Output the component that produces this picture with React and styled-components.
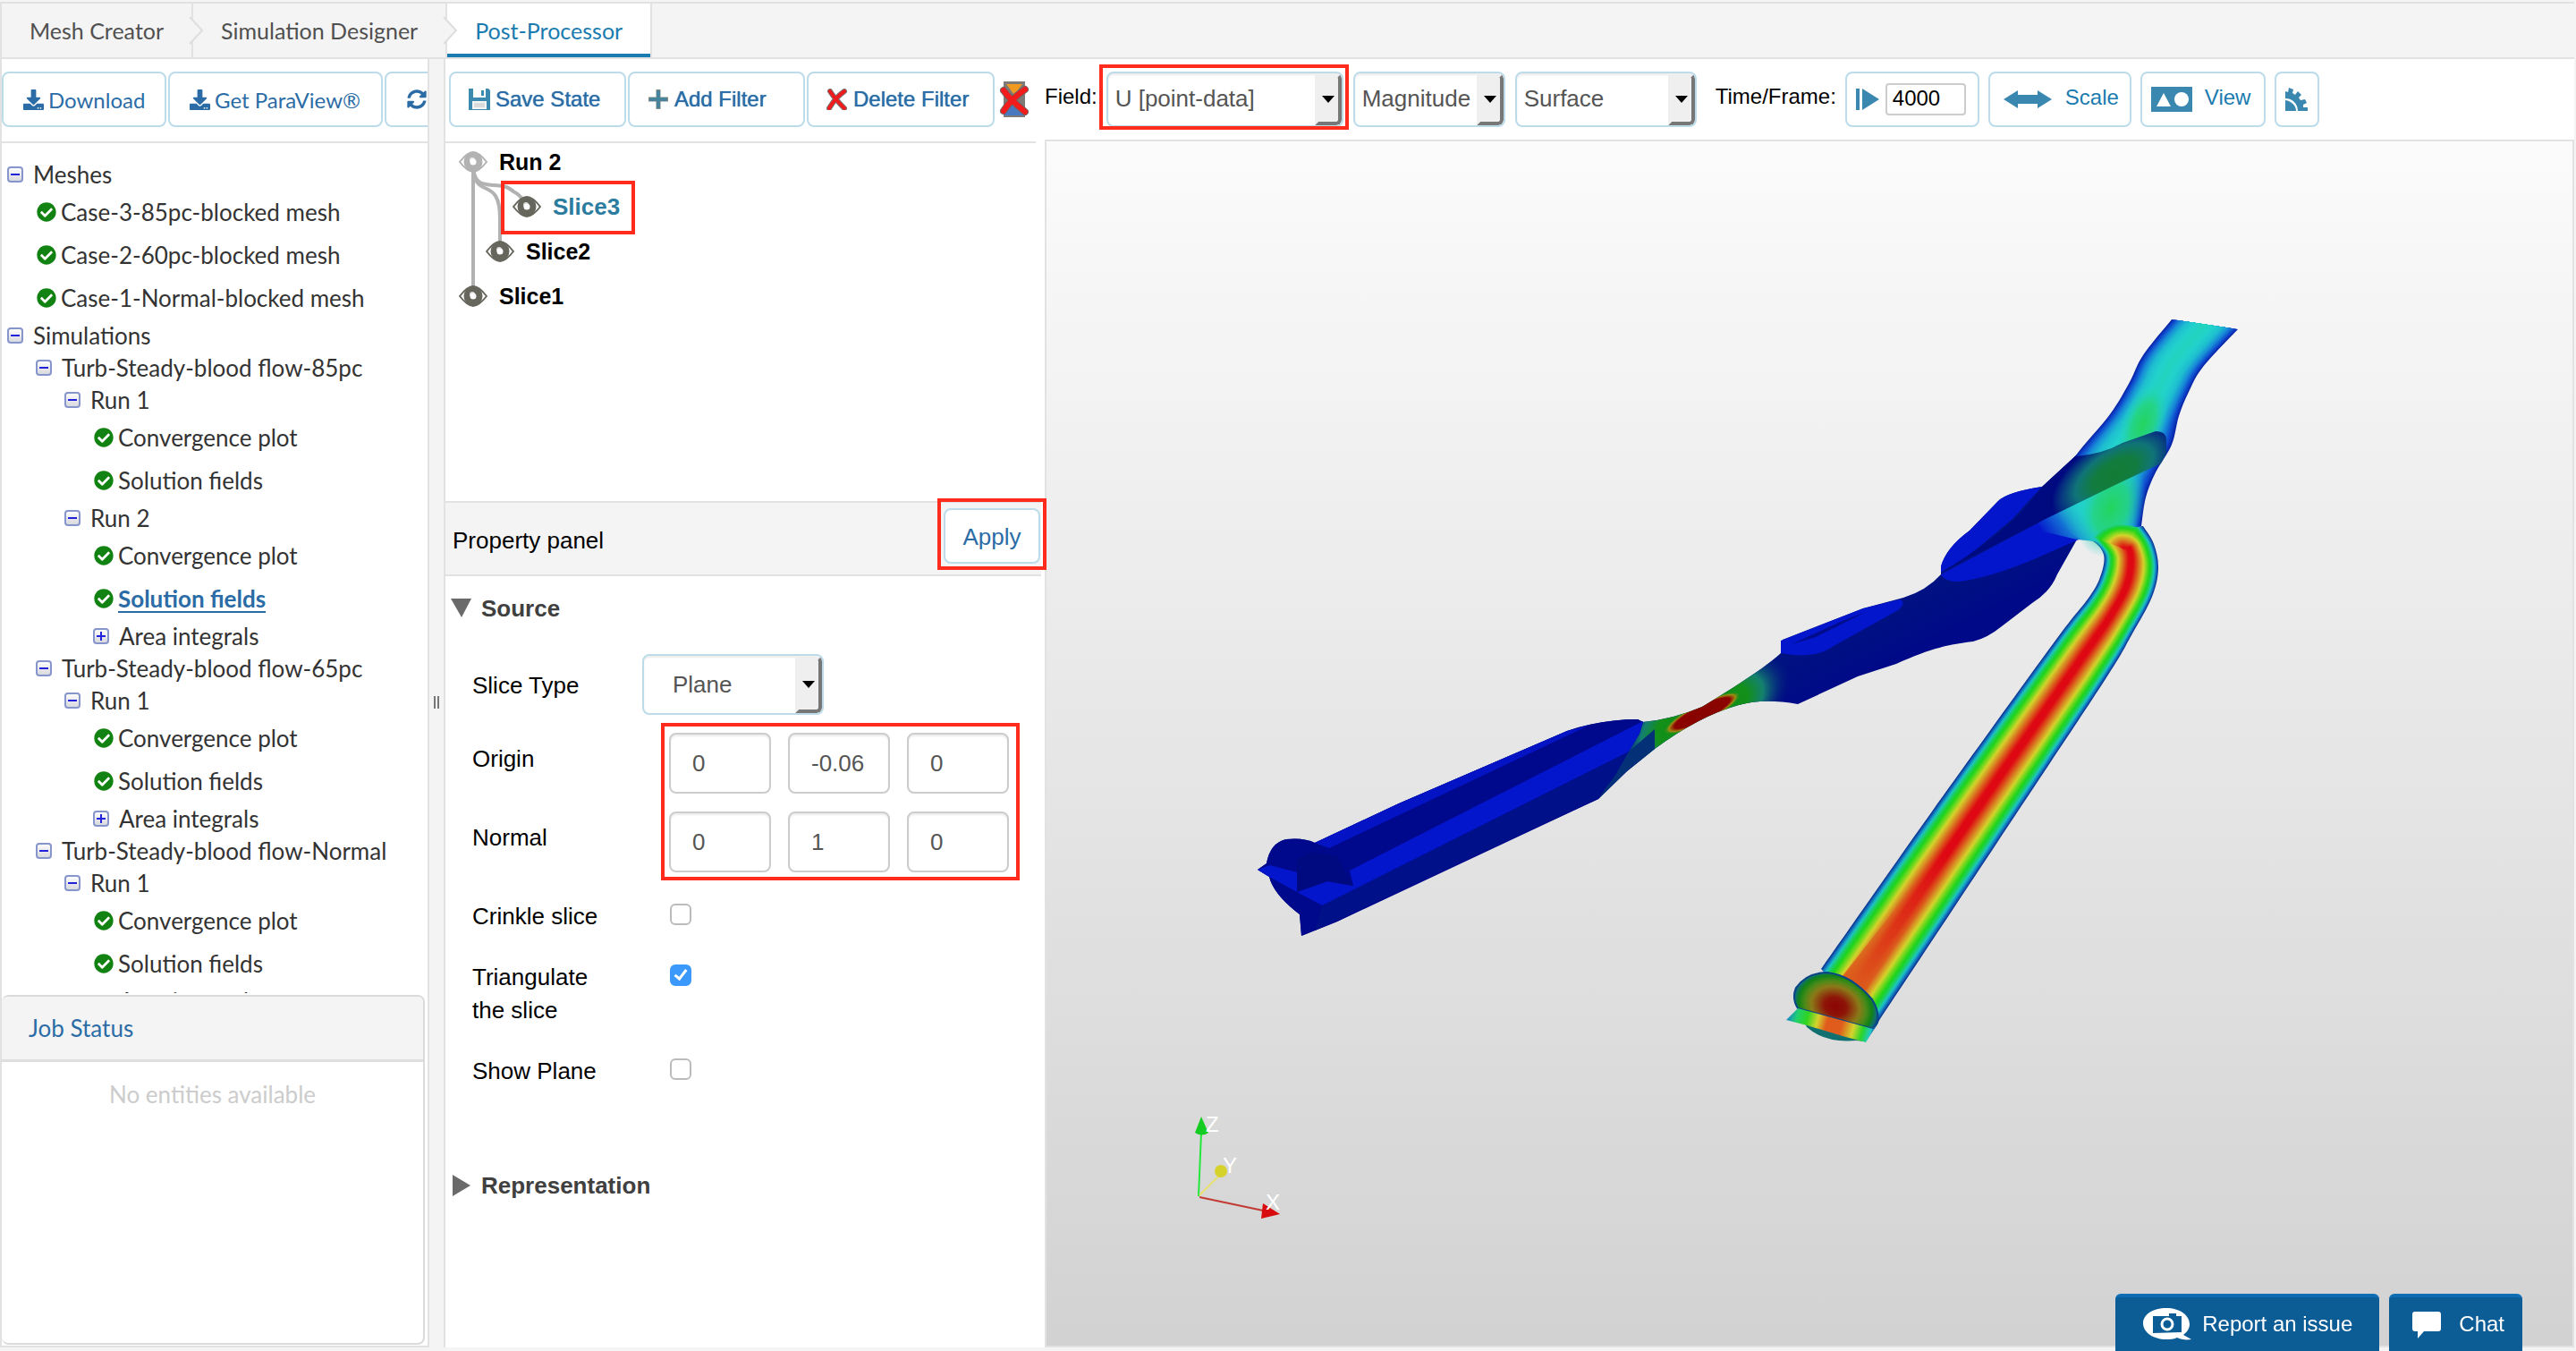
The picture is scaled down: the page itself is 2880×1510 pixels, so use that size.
import React from 'react';
import styled, { createGlobalStyle, css } from 'styled-components';
import { FaDownload, FaCheckCircle, FaSyncAlt } from 'react-icons/fa';

const GlobalStyle = createGlobalStyle`
  *, *::before, *::after { box-sizing: border-box; }
  html, body, #root { height: 100%; margin: 0; }
  body {
    background: #f4f4f4;
    color: #000;
    font-family: "Liberation Sans", Arial, sans-serif;
    font-size: 26px;
  }
  button, input, select { font-family: inherit; margin: 0; }
  ul { list-style: none; margin: 0; padding: 0; }
  svg { flex: none; }
`;

const lato = 'Lato, "Open Sans", sans-serif';
const line = '#e2e2e2';
const outline = '#bcdcea';
const link = '#2b6ca6';
const accent = '#1a7bb0';

/* ---------- page frame ---------- */

const Page = styled.div`
  display: flex;
  flex-direction: column;
  height: 100vh;
  padding: 2px 2px 4px 0;
  overflow: hidden;
`;

const TabBar = styled.nav`
  display: flex;
  flex: none;
  height: 64px;
  border: solid ${line};
  border-width: 2px 0 2px 2px;
  font-family: ${lato};
`;

const Tab = styled.a`
  position: relative;
  display: flex;
  align-items: center;
  padding: 0 31px;
  border-right: 2px solid ${line};
  color: #505050;
  font-size: 25px;
  text-decoration: none;
  ${(p) => p.$active && css`
    background: #fff;
    color: ${accent};
    box-shadow: inset 0 -4px 0 ${accent};
  `}
`;

const Chevron = styled.svg`
  position: absolute;
  right: -14px;
  top: 14px;
  width: 18px;
  height: 32px;
  z-index: 1;
`;

const Main = styled.div`
  display: flex;
  flex: 1;
  min-height: 0;
`;

/* ---------- sidebar ---------- */

const Sidebar = styled.aside`
  display: flex;
  flex-direction: column;
  flex: none;
  width: 480px;
  background: #fff;
  border: solid ${line};
  border-width: 0 2px 2px 2px;
  overflow: hidden;
  font-family: ${lato};
  color: #333;
`;

const SideTools = styled.div`
  display: flex;
  flex: none;
  gap: 2px;
  height: 94px;
  padding: 14px 0 16px;
  border-bottom: 2px solid ${line};
`;

const Button = styled.button`
  display: flex;
  flex: none;
  align-items: center;
  gap: ${(p) => p.$gap || 6}px;
  width: ${(p) => (p.$width ? `${p.$width}px` : 'auto')};
  height: 62px;
  padding: 0 0 0 ${(p) => p.$pad || 20}px;
  border: 2px solid ${outline};
  border-radius: 8px;
  background: #fff;
  color: ${(p) => p.$color || link};
  font-size: 24px;
  white-space: nowrap;
  text-shadow: ${(p) => (p.$medium ? '0 0 1px currentColor' : 'none')};
  cursor: pointer;
`;

const Tree = styled.ul`
  flex: 1;
  min-height: 0;
  padding-top: 17px;
  overflow: hidden;
`;

const TreeRow = styled.li`
  display: flex;
  align-items: center;
  height: ${(p) => (p.$leaf ? 48 : 36)}px;
  padding-left: ${(p) => (p.$leaf ? 7 : 5) + p.$level * 32}px;
  gap: ${(p) => (p.$leaf ? 5 : 10)}px;
  font-size: 26px;
  white-space: nowrap;
`;

const TreeLink = styled.a`
  color: inherit;
  text-decoration: none;
  ${(p) => p.$current && css`
    color: ${link};
    font-weight: 700;
    text-decoration: underline;
    text-decoration-thickness: 2px;
    text-underline-offset: 4px;
  `}
`;

const Toggle = styled.button`
  display: flex;
  padding: 0;
  border: 0;
  background: none;
`;

const JobCard = styled.section`
  flex: none;
  height: 391px;
  margin: 2px 3px 1px 0;
  border: 2px solid #dadada;
  border-left: 0;
  border-radius: 8px;
  background: #fff;
  overflow: hidden;
`;

const JobTitle = styled.h2`
  display: flex;
  align-items: center;
  height: 73px;
  margin: 0;
  padding-left: 30px;
  border-bottom: 3px solid #dedede;
  background: #f4f4f4;
  color: ${link};
  font-size: 26px;
  font-weight: 400;
`;

const JobEmpty = styled.p`
  margin: 18px 0 0;
  color: #ccc;
  font-size: 26px;
  line-height: 36px;
  text-align: center;
`;

const Splitter = styled.div`
  display: flex;
  flex: none;
  align-items: center;
  justify-content: center;
  gap: 2px;
  width: 16px;
  padding-bottom: 2px;
  span { width: 2px; height: 14px; background: #777; }
`;

/* ---------- workspace ---------- */

const Workspace = styled.main`
  display: flex;
  flex-direction: column;
  flex: 1;
  min-width: 0;
  background: #fff;
  border-left: 2px solid ${line};
`;

const Toolbar = styled.div`
  display: flex;
  flex: none;
  height: 90px;
  padding: 14px 0 0 4px;
  font-size: 24px;
  white-space: nowrap;
`;

const Group = styled.div`
  display: flex;
  flex: none;
  align-items: center;
  height: 62px;
  gap: ${(p) => p.$gap}px;
  margin-right: ${(p) => p.$after || 0}px;
`;

const Caption = styled.label`
  flex: none;
  padding-bottom: 6px;
  font-size: 24px;
`;

const Raised = styled.span`
  padding-bottom: 5px;
`;

const Marked = styled.div`
  position: relative;
  z-index: 1;
  display: flex;
  &::after {
    content: "";
    position: absolute;
    inset: ${(p) => p.$inset};
    border: 4px solid #ff2b1c;
    pointer-events: none;
  }
`;

const SelectShell = styled.div`
  position: relative;
  flex: none;
  width: ${(p) => p.$width}px;
  height: ${(p) => p.$height || 62}px;
  border: 2px solid ${outline};
  border-radius: 8px;
  overflow: hidden;
  box-shadow: inset 0 2px 2px #ececec;
  select {
    appearance: none;
    width: 100%;
    height: 100%;
    padding: 0 0 ${(p) => (p.$height ? 0 : 2)}px ${(p) => p.$pad || 8}px;
    border: 0;
    background: transparent;
    color: #555;
    font-size: 26px;
  }
`;

const SelectArrow = styled.span`
  position: absolute;
  top: 0;
  right: 0;
  bottom: 0;
  display: flex;
  align-items: center;
  justify-content: center;
  width: 30px;
  background: #efefef;
  border: 4px solid;
  border-color: #efefef #777 #777 #efefef;
  border-radius: 0 6px 6px 0;
  pointer-events: none;
`;

const FrameBox = styled.div`
  display: flex;
  flex: none;
  align-items: center;
  gap: 6px;
  width: 150px;
  height: 62px;
  padding-left: 9px;
  border: 2px solid ${outline};
  border-radius: 8px;
  input {
    width: 90px;
    height: 36px;
    padding: 0 6px 2px;
    border: 2px solid #ccc;
    border-radius: 4px;
    color: #000;
    font-size: 24px;
  }
`;

const Body = styled.div`
  display: flex;
  flex: 1;
  min-height: 0;
`;

const Panel = styled.section`
  display: flex;
  flex-direction: column;
  flex: none;
  width: 670px;
  padding: 2px 4px 0 0;
`;

const Pipeline = styled.ul`
  position: relative;
  display: flex;
  flex: none;
  flex-direction: column;
  gap: 8px;
  height: 402px;
  margin-right: 6px;
  border-top: 2px solid ${line};
`;

const Links = styled.svg`
  position: absolute;
  left: 0;
  top: 0;
  width: 120px;
  height: 200px;
`;

const PipelineRow = styled.li`
  position: relative;
  display: flex;
  align-items: center;
  height: 42px;
  padding-left: ${(p) => 15 + p.$depth * 30}px;
  font-size: ${(p) => (p.$selected ? 26 : 25)}px;
  font-weight: 700;
  color: ${(p) => (p.$selected ? '#2b7c9e' : '#000')};
`;

const PipelineItem = styled.div`
  display: flex;
  align-items: center;
  gap: 13px;
`;

const PropertyHead = styled.header`
  display: flex;
  flex: none;
  align-items: center;
  justify-content: space-between;
  height: 84px;
  padding: 0 1px 6px 8px;
  border: solid ${line};
  border-width: 2px 0;
  background: #f4f4f4;
  h2 { margin: 0; padding-top: 10px; font-size: 26px; font-weight: 400; }
  button {
    justify-content: center;
    width: 108px;
    padding: 3px 0 0;
    font-size: 26px;
  }
`;

const SectionTitle = styled.h3`
  display: flex;
  flex: none;
  align-items: center;
  gap: 11px;
  height: 36px;
  margin: ${(p) => p.$before || 0}px 0 0;
  padding-left: 6px;
  color: #404040;
  font-size: 26px;
`;

const Form = styled.form`
  display: flex;
  flex-direction: column;
  padding: 33px 0 0 30px;
  margin-bottom: 60px;
`;

const Field = styled.div`
  display: grid;
  grid-template-columns: 190px 1fr;
  align-items: start;
  margin-bottom: ${(p) => p.$after}px;
  line-height: 37px;
`;

const FieldName = styled.label`
  padding: ${(p) => p.$drop || 0}px 30px 0 0;
`;

const Vectors = styled.div`
  display: grid;
  grid-template-columns: 190px 1fr;
  row-gap: 20px;
  margin-bottom: 31px;
  line-height: 37px;
`;

const VectorCell = styled.div`
  display: flex;
  gap: 19px;
  padding-left: 30px;
`;

const VectorBox = styled(Marked)`
  grid-column: 2;
  grid-row: 1 / span 2;
  flex-direction: column;
  gap: 20px;
`;

const NumberInput = styled.input`
  width: 114px;
  height: 68px;
  padding: 0 0 0 24px;
  border: 2px solid #ccc;
  border-radius: 8px;
  box-shadow: inset 0 2px 2px #ececec;
  color: #555;
  font-size: 26px;
`;

const Check = styled.input`
  appearance: none;
  position: relative;
  width: 24px;
  height: 24px;
  margin: 4px 0 0 31px;
  border: 2px solid #bbb;
  border-radius: 6px;
  background: #fff;
  &:checked { background: #3b99fc; border-color: #3b99fc; }
  &:checked::after {
    content: "";
    position: absolute;
    left: 6px;
    top: 1px;
    width: 8px;
    height: 14px;
    border: solid #fff;
    border-width: 0 3px 3px 0;
    transform: rotate(38deg);
  }
`;

const Viewport = styled.section`
  position: relative;
  flex: 1;
  min-width: 0;
  border: 2px solid ${line};
  background: linear-gradient(#fbfbfb, #d2d2d2);
  > svg { display: block; width: 100%; height: 100%; }
`;

const Dock = styled.div`
  position: fixed;
  right: 60px;
  bottom: 0;
  display: flex;
  gap: 11px;
`;

const DockButton = styled.button`
  display: flex;
  align-items: center;
  gap: ${(p) => p.$gap}px;
  height: 64px;
  padding: 0 ${(p) => p.$right}px 0 ${(p) => p.$left}px;
  border: 0;
  border-top: 4px solid #0f6db3;
  border-radius: 6px 6px 0 0;
  background: #0c5c96;
  color: #fff;
  font-size: 24px;
`;

/* ---------- icons ---------- */

const ToggleIcon = ({ open }) => (
  <svg width="20" height="20" viewBox="0 0 20 20">
    <defs>
      <linearGradient id="tg" x1="0" y1="0" x2="0" y2="1">
        <stop offset="0" stopColor="#fff" />
        <stop offset="1" stopColor="#d6d6dc" />
      </linearGradient>
    </defs>
    <rect x="2" y="2" width="16" height="16" rx="3" fill="url(#tg)" stroke="#8795cd" strokeWidth="2" />
    <path d={open ? 'M5 10h10' : 'M5 10h10M10 5v10'} stroke="#2222dd" strokeWidth="2" />
  </svg>
);

const Eye = ({ color }) => (
  <svg width="32" height="26" viewBox="0 0 32 26">
    <path d="M1 13C8 4 12 2 16 2s8 2 15 11c-7 9-11 11-15 11S8 22 1 13z" fill="#fff" stroke={color} strokeWidth="2" />
    <circle cx="16" cy="13" r="7" fill="none" stroke={color} strokeWidth="7" />
    <circle cx="15" cy="11" r="3" fill="#fff" opacity="0.75" />
  </svg>
);

const SaveIcon = () => (
  <svg width="24" height="24" viewBox="0 0 24 24">
    <path d="M0 0h22l2 2v22H0z" fill="#3d8ab0" />
    <path d="M5 0h14v10H5z" fill="#fff" />
    <path d="M14 2h3v6h-3z" fill="#3d8ab0" />
    <path d="M4 14h16v9H4z" fill="#f4f4f4" />
    <path d="M6 16h12v5H6z" fill="#d8dadb" />
  </svg>
);

const PlusIcon = () => (
  <svg width="24" height="24" viewBox="0 0 24 24">
    <path d="M12 1v22M1 12h22" stroke="#8b8b80" strokeWidth="5" />
    <path d="M12 2v20M2 12h20" stroke="#46849e" strokeWidth="4" />
  </svg>
);

const CrossIcon = () => (
  <svg width="24" height="24" viewBox="0 0 24 24">
    <path d="M4 3q5 8 16 19M20 3Q10 10 3 22" fill="none" stroke="#777" strokeWidth="6" strokeLinecap="round" />
    <path d="M4 3q5 8 16 19M20 3Q10 10 3 22" fill="none" stroke="#ee1c1c" strokeWidth="4" strokeLinecap="round" />
  </svg>
);

const ClearIcon = () => (
  <svg width="32" height="40" viewBox="0 0 32 40">
    <path d="M4 0h24v40H4z" fill="#7d7a78" />
    <path d="M7 3h18l-9 12z" fill="#f29a1f" />
    <path d="M16 22l12 16H4z" fill="#4a78c0" />
    <path d="M4 10q6 9 24 24M28 9Q12 20 4 33" fill="none" stroke="#6f6664" strokeWidth="8" strokeLinecap="round" />
    <path d="M4 10q6 9 24 24M28 9Q12 20 4 33" fill="none" stroke="#f21c1c" strokeWidth="6" strokeLinecap="round" />
  </svg>
);

const PlayIcon = () => (
  <svg width="28" height="24" viewBox="0 0 28 24">
    <path d="M1 0h4v24H1zM8 0l19 12L8 24z" fill="#3a88af" />
  </svg>
);

const ScaleIcon = () => (
  <svg width="54" height="22" viewBox="0 0 54 22">
    <path d="M0 11L16 1v5h22V1l16 10-16 10v-5H16v5z" fill="#3a88af" />
  </svg>
);

const ViewIcon = () => (
  <svg width="46" height="28" viewBox="0 0 46 28">
    <path d="M0 0h46v28H0z" fill="#3a88af" />
    <path d="M14 7l8 15H6z" fill="#fff" />
    <circle cx="34" cy="14" r="8" fill="#fff" />
  </svg>
);

const GearIcon = () => (
  <svg width="26" height="26" viewBox="0 0 26 26">
    <path d="M0 4l3 1 1-5 5 2-1 4 3 2 3-4 4 4-3 3 2 3 5-1 2 4-4 2v3h5v4H14C14 18 8 12 0 12z" fill="#3a88af" />
    <path d="M0 14c7 1 12 6 12 12H0z" fill="#3a88af" />
  </svg>
);

const ReportIcon = () => (
  <svg width="56" height="38" viewBox="0 0 56 38">
    <path d="M27 1c15 0 26 8 26 18 0 5-3 9-7 12l9 5c-6 1-12 0-16-2-4 2-8 2-12 2C12 36 1 28 1 18S12 1 27 1z" fill="#fff" />
    <path d="M12 10h18V7h8v3h6v18l-32 1z" fill="#0c5c96" />
    <circle cx="28" cy="19" r="6" fill="#0c5c96" stroke="#fff" strokeWidth="3" />
  </svg>
);

const ChatIcon = () => (
  <svg width="32" height="32" viewBox="0 0 32 32">
    <path d="M3 2h26q3 0 3 3v16q0 3-3 3H13l-7 8v-8H3q-3 0-3-3V5q0-3 3-3z" fill="#fff" />
  </svg>
);

const Caret = ({ open }) => (
  <svg width="23" height="24" viewBox="0 0 23 24">
    <path d={open ? 'M0 1h23L12 22z' : 'M2 0l20 12L2 24z'} fill="#6a6a6a" />
  </svg>
);

/* ---------- flow model drawing ---------- */

const curve = (pts) => {
  let d = '';
  for (let i = 0; i < pts.length - 1; i += 1) {
    const p0 = pts[Math.max(0, i - 1)];
    const p1 = pts[i];
    const p2 = pts[i + 1];
    const p3 = pts[Math.min(pts.length - 1, i + 2)];
    d += `C${p1[0] + (p2[0] - p0[0]) / 6} ${p1[1] + (p2[1] - p0[1]) / 6} ${p2[0] - (p3[0] - p1[0]) / 6} ${p2[1] - (p3[1] - p1[1]) / 6} ${p2[0]} ${p2[1]}`;
  }
  return d;
};

const mix = (stops, t) => {
  let i = 0;
  while (i < stops.length - 2 && t > stops[i + 1][0]) i += 1;
  const [a, ca] = stops[i];
  const [b, cb] = stops[i + 1];
  const k = Math.min(1, Math.max(0, (t - a) / (b - a)));
  return `rgb(${ca.map((v, n) => Math.round(v + (cb[n] - v) * k)).join(',')})`;
};

const lerp = (a, b, t) => [a[0] + (b[0] - a[0]) * t, a[1] + (b[1] - a[1]) * t];

/* each pair holds the two wall points facing each other */
const branch = [
  [[2322, 602], [2396, 588]],
  [[2340, 605], [2408, 608]],
  [[2352, 620], [2413, 635]],
  [[2349, 642], [2406, 667]],
  [[2336, 667], [2383, 710]],
  [[2295, 720], [2352, 762]],
  [[2160, 907], [2232, 943]],
  [[2036, 1083], [2100, 1142]],
];

const trunk = [
  [[2428, 357], [2502, 368]],
  [[2396, 397], [2463, 410]],
  [[2381, 427], [2447, 438]],
  [[2359, 463], [2436, 465]],
  [[2320, 510], [2428, 497]],
  [[2296, 550], [2410, 528]],
  [[2300, 582], [2399, 556]],
  [[2326, 603], [2394, 588]],
];

const branchStops = [
  [0, [12, 60, 150]],
  [0.05, [20, 110, 190]],
  [0.13, [28, 196, 196]],
  [0.2, [30, 205, 110]],
  [0.3, [28, 212, 28]],
  [0.42, [120, 216, 32]],
  [0.52, [212, 212, 44]],
  [0.66, [216, 136, 36]],
  [0.8, [220, 60, 24]],
  [0.9, [222, 10, 20]],
  [1, [222, 8, 20]],
];

const trunkStops = [
  [0, [10, 40, 170]],
  [0.08, [14, 70, 205]],
  [0.25, [24, 140, 215]],
  [0.45, [30, 190, 208]],
  [0.7, [34, 210, 204]],
  [1, [34, 212, 190]],
];

const layer = (pairs, s, apex) => {
  const half = s / 2;
  const left = pairs.map(([a, b]) => lerp(a, b, half));
  const right = pairs.map(([a, b]) => lerp(b, a, half)).reverse();
  const start = left[0];
  const top = apex ? `Q${apex[0]} ${apex[1]} ${start[0]} ${start[1]}` : '';
  return `M${start[0]} ${start[1]}${curve(left)}L${right[0][0]} ${right[0][1]}${curve(right)}${top}Z`;
};

const steps = (from, to, n) => Array.from({ length: n }, (_, i) => from + ((to - from) * i) / (n - 1));

const bodyPath = 'M1455 1046L1453 1022Q1424 1000 1419 980L1406 972L1416 965Q1420 942 1438 938Q1458 936 1470 942L1564 898L1752 817Q1790 804 1831 804L1837 807Q1870 804 1903 790C1944 765 1972 747 1991 730L1993 715L2083 680L2128 668Q2154 660 2170 642V633Q2176 612 2202 593L2234 560Q2244 550 2283 544L2322 508L2400 500L2350 600L2322 603L2300 642Q2292 662 2272 674L2238 700Q2222 713 2206 717C2180 720 2160 724 2120 742L2077 756L2010 787Q1972 780 1944 788Q1900 800 1850 837L1819 862L1787 893L1605 977L1495 1030Z';

const FlowModel = () => (
  <svg viewBox="1170 158 1706 1346" preserveAspectRatio="xMidYMid meet" role="img" aria-label="Velocity magnitude on slices">
    <defs>
      <clipPath id="body"><path d={bodyPath} /></clipPath>
      <radialGradient id="neck">
        <stop offset="0" stopColor="#0f8a1e" />
        <stop offset="0.5" stopColor="#129018" />
        <stop offset="0.68" stopColor="#148070" />
        <stop offset="1" stopColor="#000c80" stopOpacity="0" />
      </radialGradient>
      <radialGradient id="jet">
        <stop offset="0" stopColor="#860400" />
        <stop offset="0.72" stopColor="#8c0400" />
        <stop offset="0.86" stopColor="#a08a14" />
        <stop offset="1" stopColor="#129018" stopOpacity="0" />
      </radialGradient>
      <radialGradient id="green">
        <stop offset="0" stopColor="#24d45c" />
        <stop offset="0.5" stopColor="#24d480" stopOpacity="0.85" />
        <stop offset="1" stopColor="#22d2cc" stopOpacity="0" />
      </radialGradient>
      <radialGradient id="slice" gradientUnits="userSpaceOnUse" cx="0" cy="0" r="1" gradientTransform="translate(2364 530) rotate(-34) scale(80 40)">
        <stop offset="0" stopColor="#127c34" />
        <stop offset="0.35" stopColor="#127c40" />
        <stop offset="0.62" stopColor="#107478" />
        <stop offset="0.86" stopColor="#063480" />
        <stop offset="1" stopColor="#000a80" />
      </radialGradient>
      <linearGradient id="shoulder" gradientUnits="userSpaceOnUse" x1="2288" y1="602" x2="2332" y2="572">
        <stop offset="0" stopColor="#0418cc" />
        <stop offset="0.45" stopColor="#1470d4" />
        <stop offset="1" stopColor="#22d0cc" stopOpacity="0" />
      </linearGradient>
      <linearGradient id="outlet" gradientUnits="userSpaceOnUse" x1="2180" y1="960" x2="2070" y2="1110">
        <stop offset="0" stopColor="#dc5c1c" stopOpacity="0" />
        <stop offset="1" stopColor="#dc5c1c" />
      </linearGradient>
      <radialGradient id="disc" gradientUnits="userSpaceOnUse" cx="0" cy="0" r="1" gradientTransform="translate(2052 1125) rotate(20) scale(50 40)">
        <stop offset="0" stopColor="#8a0404" />
        <stop offset="0.25" stopColor="#8e1408" />
        <stop offset="0.55" stopColor="#8a7a18" />
        <stop offset="0.7" stopColor="#4c8a18" />
        <stop offset="0.84" stopColor="#108218" />
        <stop offset="0.93" stopColor="#107070" />
        <stop offset="1" stopColor="#083c80" />
      </radialGradient>
      <linearGradient id="lip" gradientUnits="userSpaceOnUse" x1="2000" y1="1132" x2="2094" y2="1158">
        <stop offset="0" stopColor="#1888c8" />
        <stop offset="0.1" stopColor="#20d070" />
        <stop offset="0.22" stopColor="#30d420" />
        <stop offset="0.34" stopColor="#d4d42c" />
        <stop offset="0.45" stopColor="#e05c1c" />
        <stop offset="0.62" stopColor="#e05c1c" />
        <stop offset="0.76" stopColor="#d4d42c" />
        <stop offset="0.87" stopColor="#28d428" />
        <stop offset="0.96" stopColor="#20c8c8" />
        <stop offset="1" stopColor="#1458b0" />
      </linearGradient>
      <linearGradient id="hull" gradientUnits="userSpaceOnUse" x1="1640" y1="900" x2="1670" y2="960">
        <stop offset="0" stopColor="#001480" />
        <stop offset="1" stopColor="#000a88" />
      </linearGradient>
    </defs>

    <path d={bodyPath} fill="url(#hull)" />
    <g clipPath="url(#body)">
      <ellipse cx="1903" cy="800" rx="112" ry="54" transform="rotate(-30 1903 800)" fill="url(#neck)" />
      <ellipse cx="1903" cy="797" rx="48" ry="11" transform="rotate(-27 1903 797)" fill="url(#jet)" />
    </g>
    <path d="M1406 972L1416 965Q1420 942 1438 938Q1458 936 1470 942L1564 898L1752 817Q1790 804 1831 804L1837 807L1833 820L1821 840L1787 893L1495 1030L1455 1046L1453 1022Q1424 1000 1419 980Z" fill="#00088c" />
    <path d="M1787 893L1821 840L1850 815L1850 837L1819 862Z" fill="#043078" />
    <path d="M1478 1012L1821 840L1805 868L1786 893L1470 1040Z" fill="#001088" />
    <path d="M1470 942L1564 898L1752 817L1776 811L1486 948Z" fill="#0414c4" />
    <path d="M1509 973L1837 806L1833 820L1821 840L1478 1012L1450 997L1484 985L1513 990Z" fill="#0416cc" />
    <path d="M1406 972L1420 967L1450 975V997L1419 980Z" fill="#0416cc" />
    <path d="M1450 960L1466 952L1495 957L1513 990L1484 985L1450 997Z" fill="#000a80" />
    <path d="M1991 730V716L2083 680L2124 670Q2132 674 2122 682L2050 722Q2034 734 2005 732Z" fill="#0416cc" />
    <path d="M2003 720L2060 694L2086 684L2030 712Z" fill="#000c8c" />
    <path d="M2170 640V633Q2176 612 2202 593L2234 560Q2244 550 2283 544L2250 580L2200 622Z" fill="#0416cc" />
    <path d="M2170 642L2287 580L2340 590L2324 603L2290 618Q2230 645 2190 650Q2174 650 2170 642Z" fill="#0416cc" />

    {steps(0, 0.2, 7).map((s) => (
      <path key={s} d={layer(branch, s)} fill={mix(branchStops, s)} />
    ))}
    {steps(0, 0.98, 22).map((s) => (
      <path key={s} d={layer(trunk, s)} fill={mix(trunkStops, s)} />
    ))}
    <path d="M2300 572L2369 540L2350 606L2326 603L2304 590Z" fill="#22d0cc" />
    <ellipse cx="2396" cy="474" rx="24" ry="50" transform="rotate(20 2396 474)" fill="url(#green)" />
    <ellipse cx="2360" cy="568" rx="36" ry="56" transform="rotate(20 2360 568)" fill="url(#green)" />
    <path d="M2278 583L2369 540L2350 606L2322 603L2284 594Z" fill="url(#shoulder)" />
    {steps(0.2, 1, 34).map((s) => {
      const k = (s - 0.2) / 0.8;
      const drop = k * 20;
      const pairs = branch.map(([a, b], i) => (i === 0
        ? [[a[0] + 14 + k * 18, a[1] + drop], [b[0] + k * 2, b[1] + drop]]
        : [[a[0] + (i === 1 ? k * 14 : 0), a[1] + (i === 1 ? k * 14 : 0)], b]));
      return <path key={s} d={layer(pairs, s, [2360 + k * 14, 580 + k * 34])} fill={mix(branchStops, s)} />;
    })}
    <path d="M2190 925L2204 932L2084 1108L2056 1096Z" fill="url(#outlet)" />

    <path d="M2170 640Q2232 602 2262 570L2283 544L2320 510Q2350 508 2373 495L2410 482Q2422 482 2422 492V507L2416 518L2369 540L2287 580Z" fill="url(#slice)" />

    <path d="M2010 1127L2005 1112L2020 1092H2043L2070 1095L2093 1117L2099 1145L2086 1164L2075 1163Q2040 1166 2020 1148Z" fill="#107070" />
    <path d="M2010 1127Q2003 1116 2008 1104Q2020 1087 2043 1087Q2070 1090 2093 1117Q2102 1132 2099 1143L2094 1150Z" fill="url(#disc)" stroke="#0a4488" strokeWidth="2" />
    <path d="M2010 1127L2094 1150L2100 1142L2086 1165L2060 1158L2020 1146L1997 1140Z" fill="url(#lip)" />

    <g strokeWidth="2" fill="none">
      <path d="M1340 1337L1343 1266" stroke="#22e83a" />
      <path d="M1341 1336L1363 1314" stroke="#e8e070" />
      <path d="M1341 1338L1412 1353" stroke="#c23a34" />
    </g>
    <path d="M1343 1248l8 18q-7 5-15 0z" fill="#14cc22" />
    <circle cx="1365" cy="1309" r="7" fill="#d6d22c" />
    <path d="M1412 1345l19 12-21 5z" fill="#d80c0c" />
    <g fill="#fff" fontFamily="Liberation Sans, Arial, sans-serif" fontSize="24">
      <text x="1348" y="1265">Z</text>
      <text x="1367" y="1311">Y</text>
      <text x="1415" y="1352">X</text>
    </g>
  </svg>
);

/* ---------- data ---------- */

const treeRows = [
  { level: 0, open: true, text: 'Meshes' },
  { level: 1, leaf: true, text: 'Case-3-85pc-blocked mesh' },
  { level: 1, leaf: true, text: 'Case-2-60pc-blocked mesh' },
  { level: 1, leaf: true, text: 'Case-1-Normal-blocked mesh' },
  { level: 0, open: true, text: 'Simulations' },
  { level: 1, open: true, text: 'Turb-Steady-blood flow-85pc' },
  { level: 2, open: true, text: 'Run 1' },
  { level: 3, leaf: true, text: 'Convergence plot' },
  { level: 3, leaf: true, text: 'Solution fields' },
  { level: 2, open: true, text: 'Run 2' },
  { level: 3, leaf: true, text: 'Convergence plot' },
  { level: 3, leaf: true, current: true, text: 'Solution fields' },
  { level: 3, open: false, text: 'Area integrals' },
  { level: 1, open: true, text: 'Turb-Steady-blood flow-65pc' },
  { level: 2, open: true, text: 'Run 1' },
  { level: 3, leaf: true, text: 'Convergence plot' },
  { level: 3, leaf: true, text: 'Solution fields' },
  { level: 3, open: false, text: 'Area integrals' },
  { level: 1, open: true, text: 'Turb-Steady-blood flow-Normal' },
  { level: 2, open: true, text: 'Run 1' },
  { level: 3, leaf: true, text: 'Convergence plot' },
  { level: 3, leaf: true, text: 'Solution fields' },
  { level: 3, open: false, text: 'Area integrals' },
];

const pipelineRows = [
  { depth: 0, text: 'Run 2', color: '#b2b2b2' },
  { depth: 2, text: 'Slice3', color: '#66665c', selected: true },
  { depth: 1, text: 'Slice2', color: '#66665c' },
  { depth: 0, text: 'Slice1', color: '#66665c' },
];

const vectors = [
  { name: 'Origin', values: ['0', '-0.06', '0'] },
  { name: 'Normal', values: ['0', '1', '0'] },
];

const checks = [
  { id: 'crinkle', name: 'Crinkle slice', on: false },
  { id: 'triangulate', name: 'Triangulate the slice', on: true },
  { id: 'plane', name: 'Show Plane', on: false },
];

const Select = ({ id, value, label, ...size }) => (
  <SelectShell {...size}>
    <select id={id} aria-label={label} defaultValue={value}>
      <option>{value}</option>
    </select>
    <SelectArrow>
      <svg width="14" height="8" viewBox="0 0 14 8"><path d="M0 0h14L7 8z" /></svg>
    </SelectArrow>
  </SelectShell>
);

const Separator = () => (
  <Chevron viewBox="0 0 18 32">
    <path d="M2 1l14 15L2 31" fill="#f4f4f4" stroke="#dedede" strokeWidth="2" />
  </Chevron>
);

export default function App() {
  return (
    <Page>
      <GlobalStyle />
      <TabBar>
        <Tab href="#mesh">Mesh Creator<Separator /></Tab>
        <Tab href="#designer">Simulation Designer<Separator /></Tab>
        <Tab href="#post" $active>Post-Processor</Tab>
      </TabBar>

      <Main>
        <Sidebar>
          <SideTools>
            <Button $width={184} $gap={5} $pad={22}><FaDownload size={23} />Download</Button>
            <Button $width={240} $gap={5} $pad={22}><FaDownload size={23} />Get ParaView®</Button>
            <Button $width={80} $pad={23} aria-label="Refresh"><FaSyncAlt size={22} /></Button>
          </SideTools>
          <Tree>
            {treeRows.map((row, i) => (
              <TreeRow key={i} $level={row.level} $leaf={row.leaf}>
                {row.leaf
                  ? <FaCheckCircle size={22} color="#128312" />
                  : <Toggle aria-label={row.open ? 'Collapse' : 'Expand'}><ToggleIcon open={row.open} /></Toggle>}
                {row.leaf ? <TreeLink href="#item" $current={row.current}>{row.text}</TreeLink> : <span>{row.text}</span>}
              </TreeRow>
            ))}
          </Tree>
          <JobCard>
            <JobTitle>Job Status</JobTitle>
            <JobEmpty>No entities available</JobEmpty>
          </JobCard>
        </Sidebar>

        <Splitter><span /><span /></Splitter>

        <Workspace>
          <Toolbar>
            <Group $gap={2} $after={6}>
              <Button $medium $width={198}><SaveIcon />Save State</Button>
              <Button $medium $width={198}><PlusIcon />Add Filter</Button>
              <Button $medium $width={210}><CrossIcon />Delete Filter</Button>
            </Group>
            <Group $gap={18} $after={10}>
              <ClearIcon />
              <Caption htmlFor="field">Field:</Caption>
            </Group>
            <Group $gap={11} $after={21}>
              <Marked $inset="-8px -6px -3px -8px">
                <Select id="field" value="U [point-data]" $width={265} />
              </Marked>
              <Select id="component" label="Component" value="Magnitude" $width={170} />
              <Select id="shape" label="Representation" value="Surface" $width={203} />
            </Group>
            <Group $gap={10}>
              <Caption htmlFor="frame">Time/Frame:</Caption>
              <FrameBox>
                <PlayIcon />
                <input id="frame" defaultValue="4000" />
              </FrameBox>
              <Button $width={160} $gap={15} $pad={15} $color={accent}><ScaleIcon /><Raised>Scale</Raised></Button>
              <Button $width={140} $gap={14} $pad={10} $color={accent}><ViewIcon /><Raised>View</Raised></Button>
              <Button $width={50} $pad={10} aria-label="Settings"><GearIcon /></Button>
            </Group>
          </Toolbar>

          <Body>
            <Panel>
              <Pipeline>
                <Links viewBox="0 0 120 200">
                  <g fill="none" stroke="#b2b2b2" strokeWidth="4">
                    <path d="M31 24V168" />
                    <path d="M31 24C31 66 61 34 61 84V116" />
                    <path d="M31 24C31 60 60 38 76 54Q84 58 90 68" />
                  </g>
                </Links>
                {pipelineRows.map((row) => {
                  const item = <PipelineItem><Eye color={row.color} />{row.text}</PipelineItem>;
                  return (
                    <PipelineRow key={row.text} $depth={row.depth} $selected={row.selected}>
                      {row.selected ? <Marked $inset="-14px -17px -15px -13px">{item}</Marked> : item}
                    </PipelineRow>
                  );
                })}
              </Pipeline>

              <PropertyHead>
                <h2>Property panel</h2>
                <Marked $inset="-11px -7px -7px -7px">
                  <Button>Apply</Button>
                </Marked>
              </PropertyHead>

              <SectionTitle $before={18}><Caret open />Source</SectionTitle>
              <Form>
                <Field $after={20}>
                  <FieldName htmlFor="slice-type" $drop={17}>Slice Type</FieldName>
                  <Select id="slice-type" value="Plane" $width={203} $height={68} $pad={32} />
                </Field>
                <Vectors>
                  {vectors.map((v) => (
                    <FieldName key={v.name} htmlFor={`${v.name}-0`} $drop={11}>{v.name}</FieldName>
                  ))}
                  <VectorBox $inset="-11px 24px -9px 21px">
                    {vectors.map((v) => (
                      <VectorCell key={v.name}>
                        {v.values.map((n, i) => (
                          <NumberInput key={i} id={`${v.name}-${i}`} aria-label={`${v.name} ${i + 1}`} defaultValue={n} />
                        ))}
                      </VectorCell>
                    ))}
                  </VectorBox>
                </Vectors>
                {checks.map((c) => (
                  <Field key={c.id} $after={31}>
                    <FieldName htmlFor={c.id}>{c.name}</FieldName>
                    <Check type="checkbox" id={c.id} defaultChecked={c.on} />
                  </Field>
                ))}
              </Form>
              <SectionTitle><Caret />Representation</SectionTitle>
            </Panel>

            <Viewport>
              <FlowModel />
            </Viewport>
          </Body>
        </Workspace>
      </Main>

      <Dock>
        <DockButton $left={30} $right={30} $gap={11}><ReportIcon />Report an issue</DockButton>
        <DockButton $left={26} $right={20} $gap={20}><ChatIcon />Chat</DockButton>
      </Dock>
    </Page>
  );
}
